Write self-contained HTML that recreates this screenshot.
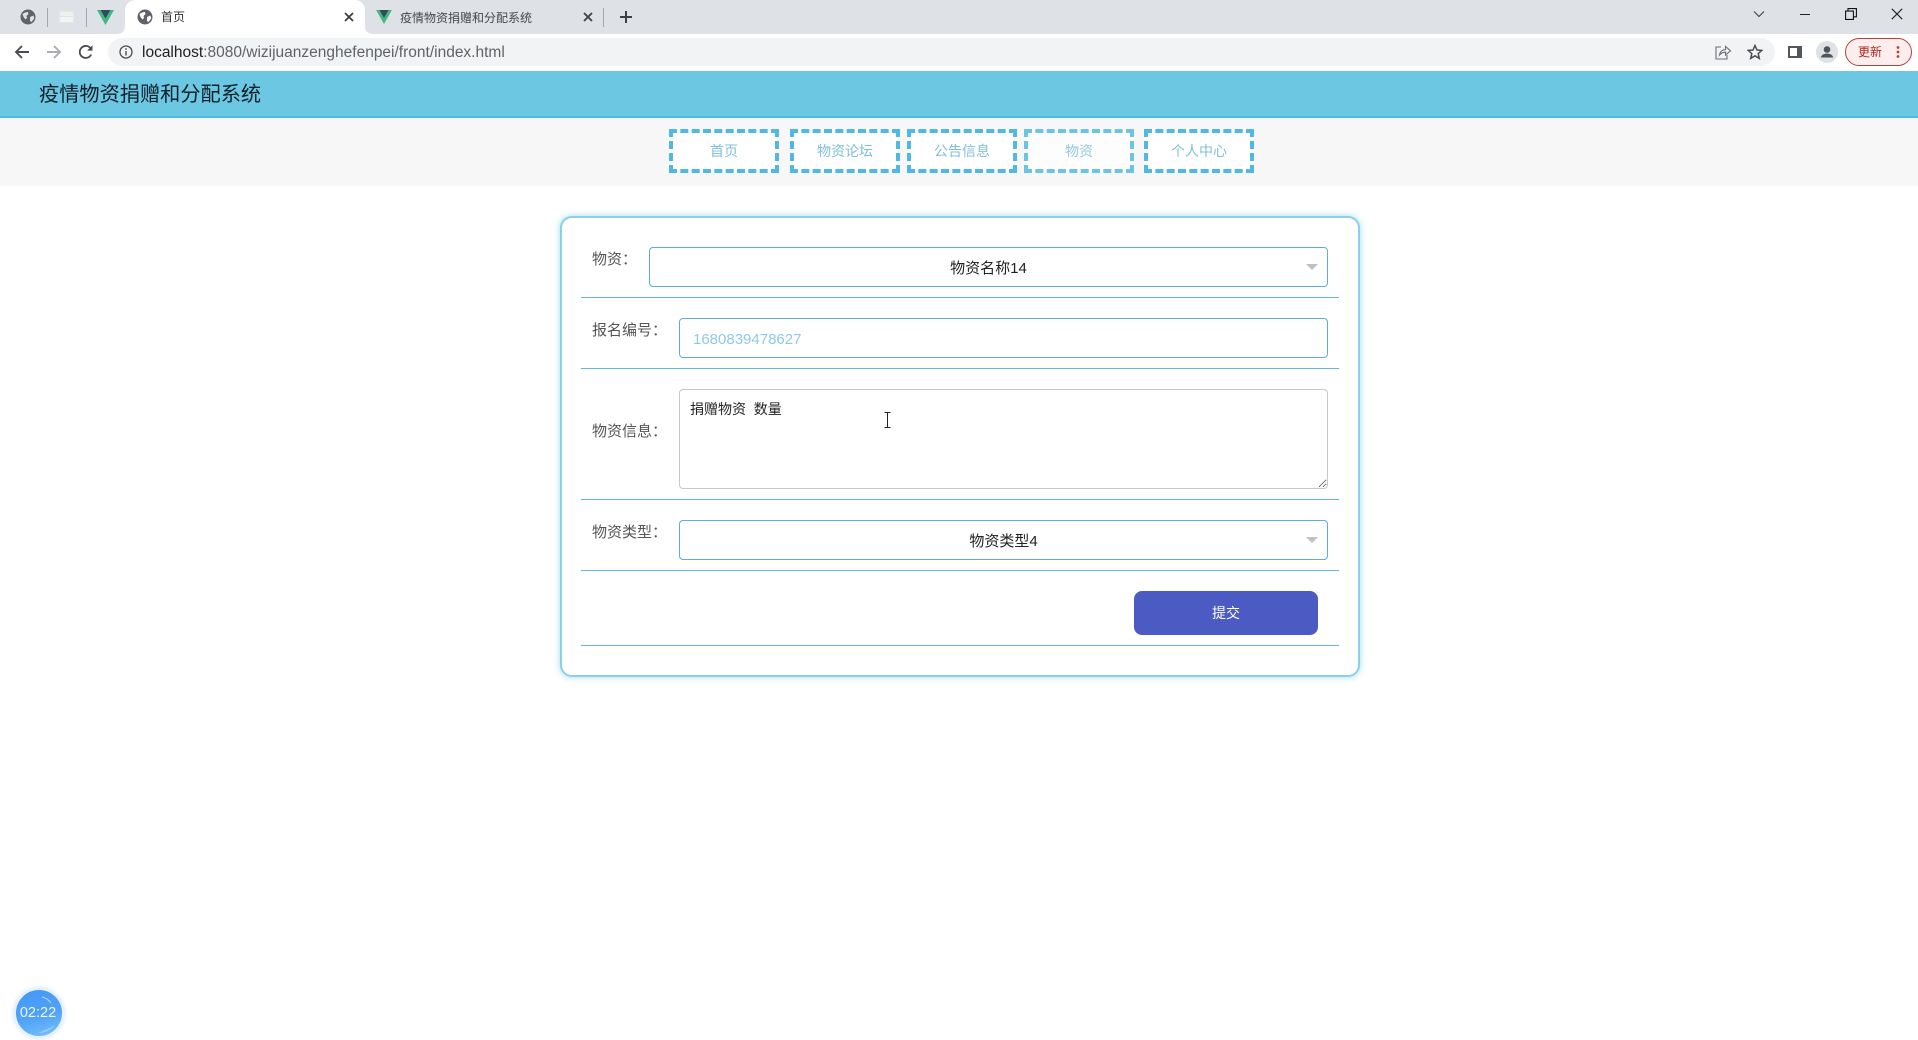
<!DOCTYPE html>
<html lang="zh-CN">
<head>
<meta charset="utf-8">
<title>疫情物资捐赠和分配系统</title>
<style>
*{box-sizing:border-box}
html,body{margin:0;padding:0;width:1918px;height:1040px;overflow:hidden;background:#fff;font-family:"Liberation Sans","Noto Sans CJK SC",sans-serif}
.abs,.abs-t{position:absolute}
.abs-t{white-space:pre;line-height:20px}
#strip{position:absolute;left:0;top:0;width:1918px;height:34px;background:#dee1e6}
#active{position:absolute;left:125px;top:0;width:240px;height:34px;background:#fff;border-radius:10px 10px 0 0}
#bar{position:absolute;left:0;top:34px;width:1918px;height:37px;background:#fff}
#omni{position:absolute;left:108px;top:38px;width:1667px;height:28px;border-radius:14px;background:#f1f3f4}
.sep{position:absolute;width:1px;background:#a4a7ab;top:8px;height:19px}
#url{position:absolute;left:142px;top:43px;font-size:15.5px;line-height:20px;color:#5f6368;white-space:pre}
#url b{font-weight:normal;color:#202124}
#hdr{position:absolute;left:0;top:71px;width:1918px;height:47px;background:#6cc7e3;border-bottom:2px solid #50b8e2;font-size:20.2px;line-height:49px;color:#10202a;padding-left:39px}
#nav{position:absolute;left:0;top:118px;width:1918px;height:68px;background:#f7f7f7}
.nb{position:absolute;top:129px;width:110px;height:44px;border:4px dashed #4fb8e4;background:#fff;color:#7fbfdc;font-size:14px;line-height:37px;text-align:center}
#card{position:absolute;left:560px;top:216px;width:800px;height:461px;background:#fff;border:2px solid #8ccfe8;border-radius:12px;box-shadow:0 0 7px rgba(108,199,227,.65)}
.ln{position:absolute;left:581px;width:758px;height:1px;background:#62b8d8}
.lb{position:absolute;left:592px;font-size:15px;line-height:20px;color:#555;white-space:pre}
select,input,textarea{position:absolute;margin:0;font-family:"Liberation Sans","Noto Sans CJK SC",sans-serif;outline:none;background:#fff}
select{appearance:none;-webkit-appearance:none;height:40px;border:1.5px solid #5aafd2;border-radius:4px;font-size:15px;color:#222;text-align:center;text-align-last:center;padding:2px 14px 0}
input{left:679px;top:318px;width:649px;height:40px;border:1.5px solid #5aafd2;border-radius:4px;font-size:15px;padding:2px 13px 0}
input::placeholder{color:#8ec8ee;opacity:1}
textarea{left:679px;top:389px;width:649px;height:100px;border:1.5px solid #c8c8c8;border-radius:4px;font-size:14px;line-height:20px;color:#222;padding:9px 10px}
.ar{position:absolute;width:0;height:0;border-left:6px solid transparent;border-right:6px solid transparent;border-top:6px solid #c0c0c0}
#btn{position:absolute;left:1134px;top:591px;width:184px;height:44px;border:0;border-radius:8px;background:#4c5bc4;color:#fff;font-size:14px;font-family:inherit}
#tm{position:absolute;left:14px;top:988px;width:50px;height:50px;border-radius:50%;background:linear-gradient(165deg,#4497f4 0,#50a2f7 55%,#78c0ff 100%);border:2px solid #e6f1fb;box-shadow:0 0 4px rgba(120,170,230,.4);color:#eef6ff;font-size:14.5px;line-height:47px;text-align:center;padding-right:2px}
</style>
</head>
<body>
<div id="strip"></div>
<div id="active"></div>
<svg class="abs" style="left:117px;top:26px" width="8" height="8"><path d="M0 8C5 8 8 5 8 0V8Z" fill="#fff"/></svg>
<svg class="abs" style="left:365px;top:26px" width="8" height="8"><path d="M8 8C3 8 0 5 0 0V8Z" fill="#fff"/></svg>

<svg class="abs" style="left:20px;top:9px" width="16" height="16" viewBox="0 0 16 16"><circle cx="8" cy="8" r="7.5" fill="#5f6368"/><path d="M2.5 5 5 3.5 8 3 8.5 5 6.5 7 7 9 5.5 10.5 3.5 8ZM10 8l3.5-1.5.8 3-2.8 3.5L10 12Z" fill="#dee1e6"/></svg>
<div class="sep" style="left:47px"></div>
<div class="abs" style="left:59px;top:11px;width:15px;height:12px;background:linear-gradient(#eef0ee 0 4px,#dfe6df 4px 5px,#f3f4f5 5px);border:1px solid #e4e6e8"></div>
<div class="sep" style="left:86px"></div>
<svg class="abs" style="left:97px;top:10px" width="17" height="15" viewBox="0 0 17 15"><path d="M0 0H17L8.5 15Z" fill="#41b883"/><path d="M3.6 0H13.4L8.5 8.5Z" fill="#35495e"/></svg>
<svg class="abs" style="left:137px;top:9px" width="16" height="16" viewBox="0 0 16 16"><circle cx="8" cy="8" r="7.5" fill="#5f6368"/><path d="M2.5 5 5 3.5 8 3 8.5 5 6.5 7 7 9 5.5 10.5 3.5 8ZM10 8l3.5-1.5.8 3-2.8 3.5L10 12Z" fill="#fff"/></svg>
<div class="abs-t" style="left:161px;top:7px;font-size:12px;color:#333">首页</div>
<svg class="abs" style="left:344px;top:12px" width="10" height="10" viewBox="0 0 10 10"><path d="M1 1 9 9M9 1 1 9" stroke="#3c4043" stroke-width="1.8"/></svg>
<svg class="abs" style="left:376px;top:10px" width="16" height="14" viewBox="0 0 17 15"><path d="M0 0H17L8.5 15Z" fill="#41b883"/><path d="M3.6 0H13.4L8.5 8.5Z" fill="#35495e"/></svg>
<div class="abs-t" style="left:400px;top:8px;font-size:12px;color:#45484c">疫情物资捐赠和分配系统</div>
<svg class="abs" style="left:583px;top:12px" width="10" height="10" viewBox="0 0 10 10"><path d="M1 1 9 9M9 1 1 9" stroke="#3c4043" stroke-width="1.8"/></svg>
<div class="sep" style="left:603px"></div>
<svg class="abs" style="left:619px;top:10px" width="14" height="14" viewBox="0 0 14 14"><path d="M7 1V13M1 7H13" stroke="#3c4043" stroke-width="2"/></svg>

<svg class="abs" style="left:1752px;top:10px" width="14" height="8" viewBox="0 0 14 8"><path d="M2 1.5 7 6.5 12 1.5" fill="none" stroke="#3c4043" stroke-width="1.1"/></svg>
<div class="abs" style="left:1800px;top:13.5px;width:10px;height:1.2px;background:#222"></div>
<svg class="abs" style="left:1845px;top:8px" width="12" height="12" viewBox="0 0 12 12"><path d="M.6 3.1H8.4V11.4H.6ZM3 3V.6H11.4V8.8H8.5" fill="none" stroke="#111" stroke-width="1.1"/></svg>
<svg class="abs" style="left:1891px;top:8px" width="12" height="12" viewBox="0 0 12 12"><path d="M.8.8 11.2 11.2M11.2.8.8 11.2" stroke="#222" stroke-width="1.1"/></svg>

<div id="bar"></div>
<svg class="abs" style="left:14px;top:44px" width="16" height="16" viewBox="0 0 16 16"><path d="M15 8H2M8 2 2 8 8 14" fill="none" stroke="#4a4d51" stroke-width="1.9"/></svg>
<svg class="abs" style="left:46px;top:44px" width="16" height="16" viewBox="0 0 16 16"><path d="M1 8H14M8 2 14 8 8 14" fill="none" stroke="#a9acb0" stroke-width="1.9"/></svg>
<svg class="abs" style="left:78px;top:44px" width="16" height="16" viewBox="0 0 16 16"><path d="M13.2 10.5A6 6 0 1 1 13 5" fill="none" stroke="#4a4d51" stroke-width="1.8"/><path d="M14.5 1.2V6.6H9.1Z" fill="#4a4d51"/></svg>
<div id="omni"></div>
<svg class="abs" style="left:119px;top:45px" width="14" height="14" viewBox="0 0 14 14"><circle cx="7" cy="7" r="6" fill="none" stroke="#4a4d51" stroke-width="1.3"/><path d="M7 6V10.5" stroke="#4a4d51" stroke-width="1.4"/><circle cx="7" cy="4" r=".9" fill="#4a4d51"/></svg>
<div id="url"><b>localhost</b>:8080/wizijuanzenghefenpei/front/index.html</div>
<svg class="abs" style="left:1715px;top:44px" width="16" height="16" viewBox="0 0 16 16"><path d="M6 3H1V15H12V11" fill="none" stroke="#6b6e72" stroke-width="1.1"/><path d="M4.5 11C5 7.5 7.5 5.8 10.5 5.6V2.5L15.5 6.8 10.5 11V8.2C8 8.2 6 9.2 4.5 11Z" fill="none" stroke="#6b6e72" stroke-width="1.1"/></svg>
<svg class="abs" style="left:1747px;top:44px" width="16" height="16" viewBox="0 0 16 16"><path d="M8 1.5 10 6 14.8 6.4 11.2 9.6 12.3 14.4 8 11.8 3.7 14.4 4.8 9.6 1.2 6.4 6 6Z" fill="none" stroke="#4a4d51" stroke-width="1.5"/></svg>
<svg class="abs" style="left:1788px;top:46px" width="14" height="12" viewBox="0 0 14 12"><rect width="14" height="12" fill="#54575b"/><rect x="2" y="2" width="7" height="8" fill="#fff"/></svg>
<svg class="abs" style="left:1816px;top:41px" width="22" height="22" viewBox="0 0 22 22"><circle cx="11" cy="11" r="11" fill="#dee1e6"/><circle cx="11" cy="8.5" r="3.3" fill="#4f5357"/><path d="M4.8 16.5C5.5 13.5 8 12.6 11 12.6S16.5 13.5 17.2 16.5Z" fill="#4f5357"/></svg>
<div class="abs" style="left:1845px;top:38px;width:67px;height:28px;border-radius:14px;background:#fdeeed;border:1.2px solid #b3423a"></div>
<div class="abs-t" style="left:1858px;top:42px;font-size:12px;color:#b3261e">更新</div>
<svg class="abs" style="left:1896px;top:45px" width="4" height="14"><circle cx="2" cy="2.5" r="1.4" fill="#b3423a"/><circle cx="2" cy="7" r="1.4" fill="#b3423a"/><circle cx="2" cy="11.5" r="1.4" fill="#b3423a"/></svg>

<div id="hdr">疫情物资捐赠和分配系统</div>
<div id="nav"></div>
<div class="nb" style="left:669px">首页</div>
<div class="nb" style="left:790px">物资论坛</div>
<div class="nb" style="left:907px">公告信息</div>
<div class="nb" style="left:1024px;opacity:.82">物资</div>
<div class="nb" style="left:1144px">个人中心</div>

<div id="card"></div>

<div class="lb" style="top:250px">物资：</div>
<select style="left:649px;top:247px;width:679px"><option>物资名称14</option></select>
<div class="ar" style="left:1306px;top:264px"></div>
<div class="ln" style="top:297px"></div>

<div class="lb" style="top:321px">报名编号：</div>
<input type="text" placeholder="1680839478627">
<div class="ln" style="top:368px"></div>

<div class="lb" style="top:422px">物资信息：</div>
<textarea>捐赠物资  数量</textarea>
<div class="ln" style="top:499px"></div>

<div class="lb" style="top:523px">物资类型：</div>
<select style="left:679px;top:520px;width:649px"><option>物资类型4</option></select>
<div class="ar" style="left:1306px;top:537px"></div>
<div class="ln" style="top:570px"></div>

<button id="btn">提交</button>
<div class="ln" style="top:645px"></div>

<svg class="abs" style="left:884px;top:412px" width="7" height="16" viewBox="0 0 7 16"><path d="M.5.5H6.5M.5 15.5H6.5M3.5.5V15.5" stroke="#222" stroke-width="1" fill="none"/></svg>

<div id="tm">02:22</div>
<svg class="abs" style="left:14px;top:988px" width="50" height="50" viewBox="0 0 50 50"><path d="M28 9C32 10 35 12 37 15" fill="none" stroke="#cfe6ff" stroke-width="1" opacity=".8"/><path d="M24 45C31 45 37 42 41 37 35 41 29 43 24 45Z" fill="#a9d8ff" opacity=".8"/></svg>
</body>
</html>
